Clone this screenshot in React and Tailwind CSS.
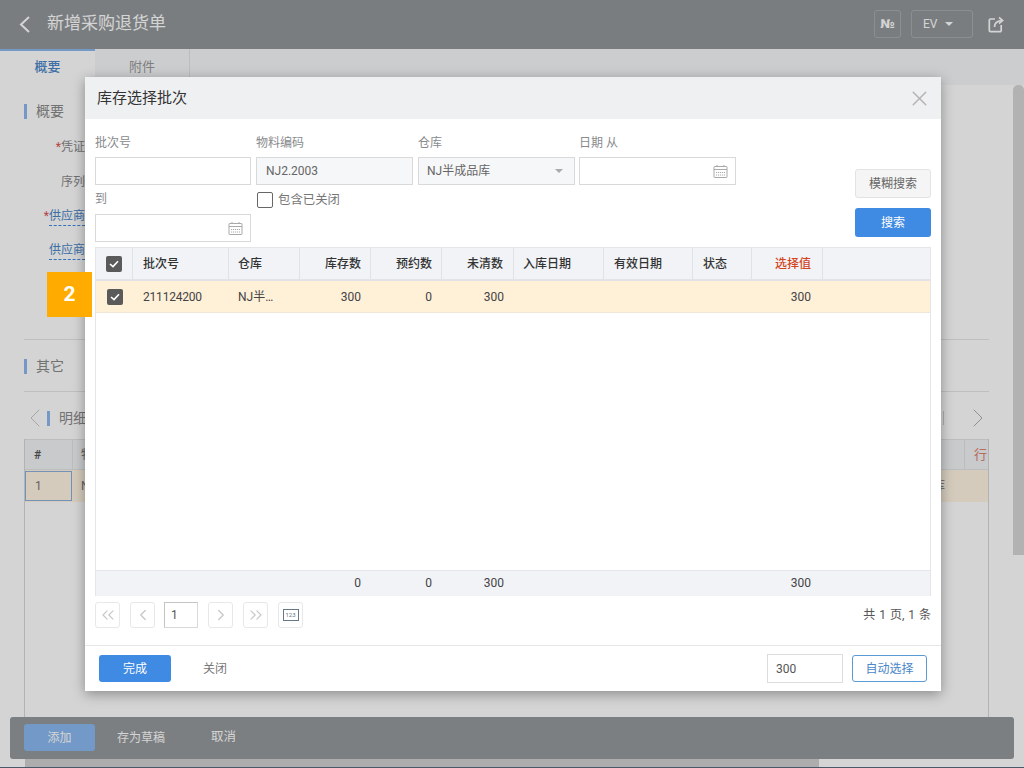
import { ChevronLeft, ChevronRight, ChevronsLeft, ChevronsRight, X } from "lucide-react";

const gridCols = "grid grid-cols-[37px_96px_71px_71px_71px_72px_90px_89px_59px_71px_1fr]";

function CheckBox() {
    return (
        <span className="flex h-[16px] w-[16px] items-center justify-center rounded-[2px] bg-[#5a5a5a]">
            <svg width="10" height="8" viewBox="0 0 10 8" fill="none" stroke="white" strokeWidth="1.6">
                <path d="M1 4 L4 6.6 L9 1.2" />
            </svg>
        </span>
    );
}

function CalendarIcon() {
    return (
        <svg width="15" height="15" viewBox="0 0 15 15" fill="none" stroke="#a9a9a9" strokeWidth="1">
            <rect x="1" y="2.5" width="13" height="11" rx="0.5" />
            <path d="M1 5.5 H14 M4 1 V3 M11 1 V3" />
            <path d="M3 8.5 H12 M3 11 H12" strokeDasharray="1.2 0.8" />
        </svg>
    );
}

function ShareIcon() {
    return (
        <svg width="16" height="17" viewBox="0 0 16 17" fill="none" stroke="white" strokeWidth="1.7" className="ml-[15px]">
            <path d="M7 3 H2.5 a1.2 1.2 0 0 0 -1.2 1.2 V14.5 a1.2 1.2 0 0 0 1.2 1.2 H12 a1.2 1.2 0 0 0 1.2 -1.2 V9" />
            <path d="M6.5 11 C6.5 7.5 8.5 5 13.5 4.6" />
            <path d="M11 1.4 L14.6 4.6 L11 7.6" />
        </svg>
    );
}

function Field({ label, labelClass, children }) {
    return (
        <div className="w-full">
            <div className={`text-[12px] text-[#888a8c] ${labelClass}`}>{label}</div>
            {children}
        </div>
    );
}

function HeadCell({ children, right, red, className }) {
    return (
        <div className={`flex items-center border-r border-[#dfe2e6] text-[12px] font-medium ${right ? "justify-end" : ""} ${red ? "text-[#d4451c]" : "text-[#333333]"} ${className}`}>
            {children}
        </div>
    );
}

function PageBtn({ children }) {
    return (
        <span className="flex h-[26px] w-[25px] items-center justify-center rounded-[3px] border border-[#e8e8e8] bg-white text-[#c8c8c8]">
            {children}
        </span>
    );
}

function SideLabel({ children, star, dashed, className }) {
    return (
        <div className={`flex justify-end text-[12px] ${className}`}>
            {star && <span className="text-[#d9534f]">*</span>}
            <span className={dashed ? "border-b border-dashed border-[#3f8ae2] text-[#4a86c8]" : "text-[#888888]"}>{children}</span>
        </div>
    );
}

function SectionTitle({ children }) {
    return (
        <div className="flex items-center gap-[9px]">
            <span className="h-[15px] w-[3px] bg-[#8db9ee]" />
            <span className="text-[14px] text-[#8a8a8a]">{children}</span>
        </div>
    );
}

export default function App() {
    return (
        <div className="relative h-[768px] w-[1024px] overflow-hidden bg-white font-['Roboto','Noto_Sans_CJK_SC',sans-serif]">
            {/* page behind the dialog */}
            <div className="flex h-[49px] items-center justify-between bg-[#93979a] pb-[1px] pl-[19px] pr-[20px]">
                <div className="flex items-center gap-[17px]">
                    <svg width="11" height="17" viewBox="0 0 11 17" fill="none" stroke="white" strokeWidth="2">
                        <path d="M10 1 L2 8.5 L10 16" />
                    </svg>
                    <span className="text-[17px] text-white">新增采购退货单</span>
                </div>
                <div className="flex items-center">
                    <span className="flex h-[28px] w-[27px] items-center justify-center rounded-[3px] border border-[#a9adb0] font-['DejaVu_Sans',sans-serif] text-[12px] font-bold text-white">№</span>
                    <span className="ml-[10px] flex h-[28px] w-[62px] items-center gap-[8px] rounded-[3px] border border-[#a9adb0] pl-[11px] text-[12px] text-white">
                        EV
                        <span className="h-0 w-0 border-x-[4px] border-t-[4px] border-x-transparent border-t-white" />
                    </span>
                    <ShareIcon />
                </div>
            </div>
            <div className="flex h-[36px] bg-[#f6f7f9]">
                <div className="flex w-[95px] items-center justify-center border-t-2 border-[#8db9ee] bg-white pb-[2px] text-[13px] font-medium text-[#4a86c8]">概要</div>
                <div className="flex w-[95px] items-center justify-center border-r border-[#e3e4e6] text-[13px] text-[#999999]">附件</div>
            </div>
            <div className="pl-[24px] pr-[35px] pt-[16px]">
                <SectionTitle>概要</SectionTitle>
                <div className="w-[61px]">
                    <SideLabel star className="mt-[16px]">凭证</SideLabel>
                    <SideLabel className="mt-[17px]">序列</SideLabel>
                    <SideLabel star dashed className="mt-[16px]">供应商</SideLabel>
                    <SideLabel dashed className="mt-[15px]">供应商</SideLabel>
                </div>
                <div className="mt-[79px] border-t border-[#e6e6e6] pt-[16px]">
                    <SectionTitle>其它</SectionTitle>
                </div>
                <div className="mt-[14px] border-t border-[#e6e6e6] pt-[15px]">
                    <div className="flex items-center justify-between">
                        <div className="flex items-center">
                            <ChevronLeft size={32} strokeWidth={0.7} className="-my-[5px] -ml-[5px] text-[#c4c4c4]" />
                            <span className="-ml-[4px] h-[15px] w-[3px] bg-[#8db9ee]" />
                            <span className="ml-[9px] text-[14px] text-[#8a8a8a]">明细</span>
                        </div>
                        <div className="flex items-center gap-[18px]">
                            <span className="h-[14px] w-[1px] bg-[#d0d0d0]" />
                            <ChevronRight size={32} strokeWidth={0.7} className="-my-[5px] -mr-[5px] text-[#a8a8a8]" />
                        </div>
                    </div>
                </div>
                <div className="mt-[10px] h-[343px] border-x border-[#d8d8d8]">
                    <div className="flex h-[31px] items-center justify-between border-y border-[#e3e4e6] bg-[#f1f3f6] text-[12px] text-[#555555]">
                        <div className="flex">
                            <span className="flex h-[29px] w-[48px] items-center border-r border-[#e3e4e6] pl-[9px] font-semibold">#</span>
                            <span className="ml-[8px] flex h-[29px] items-center text-[#777777]">物料编码</span>
                        </div>
                        <span className="flex h-[29px] w-[24px] items-center border-l border-[#e3e4e6] pl-[9px] text-[13px] text-[#e0806a]">行</span>
                    </div>
                    <div className="flex h-[32px] items-center justify-between bg-[#fff5e3] text-[12px] text-[#777777]">
                        <div className="flex items-center">
                            <span className="flex h-[30px] w-[47px] items-center border border-[#8ab0dc] pl-[9px]">1</span>
                            <span className="ml-[9px]">NJ2.2003</span>
                        </div>
                        <span className="mr-[43px]">NJ半成品库</span>
                    </div>
                </div>
            </div>

            {/* scrollbars */}
            <div className="absolute bottom-0 left-0 h-[9px] w-full bg-white">
                <div className="ml-[25px] h-[8px] w-[794px] bg-[#d0d0d0]" />
                <div className="h-[1px] bg-[#5a6b80]" />
            </div>
            <div className="absolute right-0 top-[85px] h-[470px] w-[11px] rounded-t-[5px] bg-[#d6d6d6]" />

            {/* bottom bar */}
            <div className="absolute bottom-[9px] left-[10px] flex h-[42px] w-[1004px] items-center rounded-[3px] bg-[#95999c] pb-[1px] pl-[14px]">
                <span className="flex h-[27px] w-[71px] items-center justify-center rounded-[3px] bg-[#8ab8f0] text-[12px] text-white">添加</span>
                <span className="ml-[22px] text-[12px] text-white">存为草稿</span>
                <span className="ml-[46px] text-[12.5px] text-white">取消</span>
            </div>

            <div className="absolute inset-0 bg-black/[.17]" />

            {/* dialog */}
            <div className="absolute left-[85px] top-[77px] w-[856px] bg-white shadow-[0_3px_12px_rgba(0,0,0,0.35)]">
                <div className="flex h-[42px] items-center justify-between bg-[#eff0f2] pl-[12px] pr-[9px]">
                    <span className="text-[15px] text-[#333333]">库存选择批次</span>
                    <X size={25} strokeWidth={1.4} className="text-[#b4b4b4]" />
                </div>
                <div className="px-[10px]">
                    <div className="flex justify-between pt-[14px]">
                        <div className="w-[641px]">
                            <div className="flex gap-[5px]">
                                <div className="w-[156px]">
                                    <Field label="批次号" labelClass="h-[24px] leading-[20px]">
                                        <div className="h-[28px] border border-[#d9d9d9] bg-white" />
                                    </Field>
                                </div>
                                <div className="w-[157px]">
                                    <Field label="物料编码" labelClass="h-[24px] leading-[20px]">
                                        <div className="flex h-[28px] items-center border border-[#d9d9d9] bg-[#f6f7f8] pl-[9px] text-[12px] text-[#666666]">NJ2.2003</div>
                                    </Field>
                                </div>
                                <div className="w-[157px]">
                                    <Field label="仓库" labelClass="h-[24px] leading-[20px]">
                                        <div className="flex h-[28px] items-center justify-between border border-[#d9d9d9] bg-[#f6f7f8] pl-[8px] pr-[11px] text-[12px] text-[#666666]">
                                            NJ半成品库
                                            <span className="h-0 w-0 border-x-[4px] border-t-[4px] border-x-transparent border-t-[#aaaaaa]" />
                                        </div>
                                    </Field>
                                </div>
                                <div className="ml-[-1px] w-[157px]">
                                    <Field label="日期 从" labelClass="h-[24px] leading-[20px]">
                                        <div className="flex h-[28px] items-center justify-end border border-[#d9d9d9] bg-white pr-[7px]">
                                            <CalendarIcon />
                                        </div>
                                    </Field>
                                </div>
                            </div>
                            <div className="flex gap-[5px]">
                                <div className="w-[156px]">
                                    <Field label="到" labelClass="h-[29px] leading-[29px]">
                                        <div className="flex h-[28px] items-center justify-end border border-[#d9d9d9] bg-white pr-[7px]">
                                            <CalendarIcon />
                                        </div>
                                    </Field>
                                </div>
                                <div className="ml-[1px] flex h-[29px] items-center gap-[5px] pt-[1px] text-[12.4px] text-[#777777]">
                                    <span className="h-[16px] w-[16px] rounded-[2px] border border-[#666666] bg-white" />
                                    包含已关闭
                                </div>
                            </div>
                        </div>
                        <div className="w-[76px] pt-[36px]">
                            <div className="flex h-[29px] items-center justify-center rounded-[3px] border border-[#e3e3e3] bg-[#f5f5f5] text-[12px] text-[#666666]">模糊搜索</div>
                            <div className="mt-[10px] flex h-[29px] items-center justify-center rounded-[3px] bg-[#3f8ae2] text-[12px] text-white">搜索</div>
                        </div>
                    </div>

                    <div className="mt-[5px] flex h-[349px] flex-col border border-b-0 border-[#e3e5e9]">
                        <div className={`${gridCols} h-[33px] border-b-2 border-[#e1e3e7] bg-[#f1f3f7]`}>
                            <div className="flex items-center justify-center border-r border-[#dfe2e6]"><CheckBox /></div>
                            <HeadCell className="px-[10px]">批次号</HeadCell>
                            <HeadCell className="px-[9px]">仓库</HeadCell>
                            <HeadCell right className="px-[9px]">库存数</HeadCell>
                            <HeadCell right className="px-[9px]">预约数</HeadCell>
                            <HeadCell right className="px-[10px]">未清数</HeadCell>
                            <HeadCell className="px-[9px]">入库日期</HeadCell>
                            <HeadCell className="px-[10px]">有效日期</HeadCell>
                            <HeadCell className="px-[10px]">状态</HeadCell>
                            <HeadCell right red className="px-[11px]">选择值</HeadCell>
                            <div />
                        </div>
                        <div className={`${gridCols} h-[32px] items-center border-b border-[#efe6d6] bg-[#fff0d8] text-[12px] text-[#444444]`}>
                            <div className="flex justify-center"><CheckBox /></div>
                            <span className="px-[10px] tracking-[-0.2px]">211124200</span>
                            <span className="px-[9px]">NJ半…</span>
                            <span className="px-[10px] text-right">300</span>
                            <span className="px-[10px] text-right">0</span>
                            <span className="px-[10px] text-right">300</span>
                            <span />
                            <span />
                            <span />
                            <span className="px-[12px] text-right">300</span>
                            <span />
                        </div>
                        <div className="flex-1" />
                        <div className={`${gridCols} h-[26px] items-center border-t border-[#e3e5e9] bg-[#f1f3f7] pb-[2px] text-[12px] text-[#444444]`}>
                            <span />
                            <span />
                            <span />
                            <span className="px-[10px] text-right">0</span>
                            <span className="px-[10px] text-right">0</span>
                            <span className="px-[10px] text-right">300</span>
                            <span />
                            <span />
                            <span />
                            <span className="px-[12px] text-right">300</span>
                            <span />
                        </div>
                    </div>

                    <div className="mt-[6px] flex h-[26px] items-center justify-between">
                        <div className="flex items-center">
                            <PageBtn><ChevronsLeft size={20} strokeWidth={1.4} /></PageBtn>
                            <span className="ml-[10px]"><PageBtn><ChevronLeft size={18} strokeWidth={1.8} /></PageBtn></span>
                            <span className="ml-[9px] flex h-[26px] w-[34px] items-center border border-[#d9d9d9] border-l-[#c4c4c4] border-t-[#c4c4c4] pl-[6px] text-[12px] text-[#555555]">1</span>
                            <span className="ml-[10px]"><PageBtn><ChevronRight size={18} strokeWidth={1.8} /></PageBtn></span>
                            <span className="ml-[10px]"><PageBtn><ChevronsRight size={20} strokeWidth={1.4} /></PageBtn></span>
                            <span className="ml-[10px]">
                                <PageBtn>
                                    <span className="flex h-[12px] w-[16px] items-center justify-center border border-[#667788] text-[6px] leading-none text-[#667788]">123</span>
                                </PageBtn>
                            </span>
                        </div>
                        <span className="text-[12px] text-[#555555] [word-spacing:1px]">共 1 页, 1 条</span>
                    </div>
                </div>

                <div className="mt-[17px] flex h-[46px] items-center justify-between border-t border-[#e8e8e8] px-[14px]">
                    <div className="flex items-center">
                        <span className="flex h-[27px] w-[72px] items-center justify-center rounded-[3px] bg-[#3f8ae2] text-[12px] text-white">完成</span>
                        <span className="ml-[32px] text-[12px] text-[#777777]">关闭</span>
                    </div>
                    <div className="flex items-center">
                        <span className="flex h-[29px] w-[76px] items-center border border-[#dddddd] pl-[8px] text-[12px] text-[#555555]">300</span>
                        <span className="ml-[9px] flex h-[27px] w-[75px] items-center justify-center rounded-[3px] border border-[#5b9bd5] text-[12px] text-[#4a86c8]">自动选择</span>
                    </div>
                </div>
            </div>

            {/* step badge */}
            <div className="absolute left-[47px] top-[272px] flex h-[45px] w-[45px] items-center justify-center bg-[#ffab00] text-[21px] font-bold text-white">2</div>
        </div>
    );
}
